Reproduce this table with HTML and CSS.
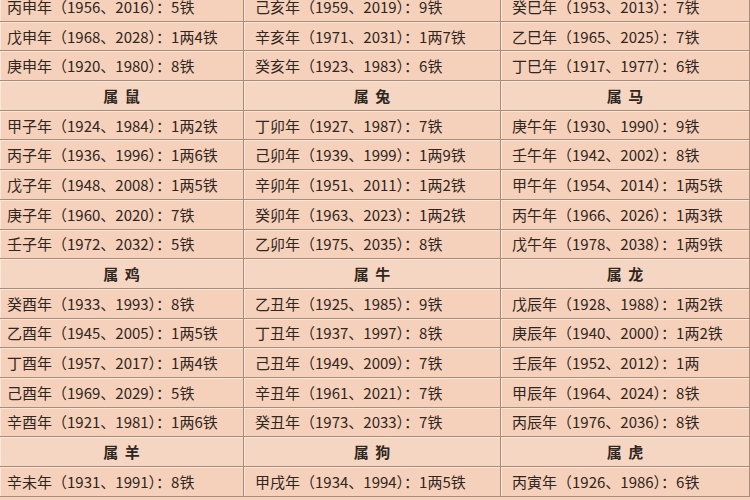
FILE: index.html
```html
<!DOCTYPE html>
<html lang="zh">
<head>
<meta charset="utf-8">
<link rel="stylesheet" href="styles.css">
</head>
<body>
<div class="table">
  <div class="cell">丙申年（1956、2016）：5铁</div>
  <div class="cell">己亥年（1959、2019）：9铁</div>
  <div class="cell">癸巳年（1953、2013）：7铁</div>

  <div class="cell">戊申年（1968、2028）：1两4铁</div>
  <div class="cell">辛亥年（1971、2031）：1两7铁</div>
  <div class="cell">乙巳年（1965、2025）：7铁</div>

  <div class="cell">庚申年（1920、1980）：8铁</div>
  <div class="cell">癸亥年（1923、1983）：6铁</div>
  <div class="cell">丁巳年（1917、1977）：6铁</div>

  <div class="cell head">属 鼠</div>
  <div class="cell head">属 兔</div>
  <div class="cell head">属 马</div>

  <div class="cell">甲子年（1924、1984）：1两2铁</div>
  <div class="cell">丁卯年（1927、1987）：7铁</div>
  <div class="cell">庚午年（1930、1990）：9铁</div>

  <div class="cell">丙子年（1936、1996）：1两6铁</div>
  <div class="cell">己卯年（1939、1999）：1两9铁</div>
  <div class="cell">壬午年（1942、2002）：8铁</div>

  <div class="cell">戊子年（1948、2008）：1两5铁</div>
  <div class="cell">辛卯年（1951、2011）：1两2铁</div>
  <div class="cell">甲午年（1954、2014）：1两5铁</div>

  <div class="cell">庚子年（1960、2020）：7铁</div>
  <div class="cell">癸卯年（1963、2023）：1两2铁</div>
  <div class="cell">丙午年（1966、2026）：1两3铁</div>

  <div class="cell">壬子年（1972、2032）：5铁</div>
  <div class="cell">乙卯年（1975、2035）：8铁</div>
  <div class="cell">戊午年（1978、2038）：1两9铁</div>

  <div class="cell head">属 鸡</div>
  <div class="cell head">属 牛</div>
  <div class="cell head">属 龙</div>

  <div class="cell">癸酉年（1933、1993）：8铁</div>
  <div class="cell">乙丑年（1925、1985）：9铁</div>
  <div class="cell">戊辰年（1928、1988）：1两2铁</div>

  <div class="cell">乙酉年（1945、2005）：1两5铁</div>
  <div class="cell">丁丑年（1937、1997）：8铁</div>
  <div class="cell">庚辰年（1940、2000）：1两2铁</div>

  <div class="cell">丁酉年（1957、2017）：1两4铁</div>
  <div class="cell">己丑年（1949、2009）：7铁</div>
  <div class="cell">壬辰年（1952、2012）：1两</div>

  <div class="cell">己酉年（1969、2029）：5铁</div>
  <div class="cell">辛丑年（1961、2021）：7铁</div>
  <div class="cell">甲辰年（1964、2024）：8铁</div>

  <div class="cell">辛酉年（1921、1981）：1两6铁</div>
  <div class="cell">癸丑年（1973、2033）：7铁</div>
  <div class="cell">丙辰年（1976、2036）：8铁</div>

  <div class="cell head">属 羊</div>
  <div class="cell head">属 狗</div>
  <div class="cell head">属 虎</div>

  <div class="cell">辛未年（1931、1991）：8铁</div>
  <div class="cell">甲戌年（1934、1994）：1两5铁</div>
  <div class="cell">丙寅年（1926、1986）：6铁</div>
</div>
</body>
</html>
```

FILE: styles.css
```css
html, body {
  margin: 0;
  padding: 0;
  background: #f3d0bb;
  overflow: hidden;
}

.table {
  display: grid;
  grid-template-columns: 244px 257px 249px;
  grid-auto-rows: 29.7px;
  margin-top: -8px;
  font-family: "Noto Sans CJK SC", "Noto Sans", sans-serif;
  font-size: 15px;
  color: #2f2620;
}

.cell {
  display: flex;
  align-items: center;
  padding-left: 11px;
  background: #f5d0bb;
  border-right: 1px solid #a98b78;
  border-bottom: 1px solid #a98b78;
  box-shadow: inset 1px 1px 0 #fce7d9;
  white-space: nowrap;
  overflow: hidden;
}

.cell:nth-child(3n+1) {
  padding-left: 7px;
}

.head {
  justify-content: center;
  padding-left: 0;
  font-weight: 700;
  background: #f5d6c3;
  word-spacing: 3px;
}

.cell.head:nth-child(3n+1) {
  padding-left: 0;
}
```
